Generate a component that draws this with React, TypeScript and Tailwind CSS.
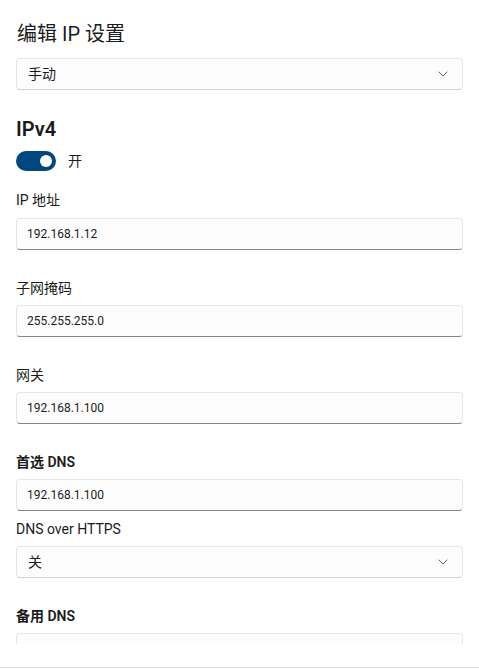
const font = { fontFamily: 'Roboto, "Noto Sans CJK SC", sans-serif' };

function Chevron() {
  return (
    <svg width="10" height="6" viewBox="0 0 10 6" fill="none" className="mr-[14px]">
      <path d="M1 1L5 5L9 1" stroke="#5f5f5f" strokeWidth="1" strokeLinecap="round" strokeLinejoin="round" />
    </svg>
  );
}

function Select({ value, className = "" }: { value: string; className?: string }) {
  return (
    <div
      className={`flex h-8 items-center justify-between rounded-[4px] border border-[#e6e6e6] border-b-[#d2d2d2] bg-[#fdfdfd] ${className}`}
    >
      <span className="pl-[11px] text-[14px] leading-5 text-[#1b1b1b]">{value}</span>
      <Chevron />
    </div>
  );
}

function Field({
  label,
  value,
  bold,
  className = "mt-7",
}: {
  label: string;
  value: string;
  bold?: boolean;
  className?: string;
}) {
  return (
    <div className={className}>
      <div className={`h-5 text-[14px] leading-5 text-[#1b1b1b] ${bold ? "font-semibold" : ""}`}>{label}</div>
      <div className="mt-[7px] flex h-8 items-center rounded-[4px] border border-[#e6e6e6] border-b-[#868686] bg-[#fdfdfd]">
        <span className="pl-[10px] text-[12px] leading-5 text-[#1b1b1b]">{value}</span>
      </div>
    </div>
  );
}

export default function App() {
  return (
    <div className="flex h-[669px] w-[479px] flex-col overflow-hidden bg-white" style={font}>
      <div className="h-[644px] overflow-hidden px-4 pt-5">
        <h2 className="h-7 pl-px text-[20px] leading-7 text-[#1b1b1b]">编辑 IP 设置</h2>
        <Select value="手动" className="mt-[10px]" />

        <h3 className="mt-[25px] h-7 text-[20px] font-semibold leading-7 text-[#1b1b1b]">IPv4</h3>
        <div className="mt-2 flex h-5 items-center gap-3">
          <div className="flex h-5 w-10 items-center justify-end rounded-full bg-[#00467f] pr-1">
            <div className="h-3 w-3 rounded-full bg-white" />
          </div>
          <span className="text-[14px] leading-5 text-[#1b1b1b]">开</span>
        </div>

        <Field label="IP 地址" value="192.168.1.12" className="mt-[19px] [&>div:last-child]:mt-2" />
        <Field label="子网掩码" value="255.255.255.0" />
        <Field label="网关" value="192.168.1.100" />
        <Field label="首选 DNS" value="192.168.1.100" bold />

        <div className="mt-2">
          <div className="h-5 text-[14px] leading-5 text-[#1b1b1b]">DNS over HTTPS</div>
          <Select value="关" className="mt-[7px]" />
        </div>

        <Field label="备用 DNS" value="" bold />
      </div>
      <div className="h-[23px]" />
      <div className="flex-1 border-t border-[#e0e0e0] bg-[#f9f9f9]" />
    </div>
  );
}
